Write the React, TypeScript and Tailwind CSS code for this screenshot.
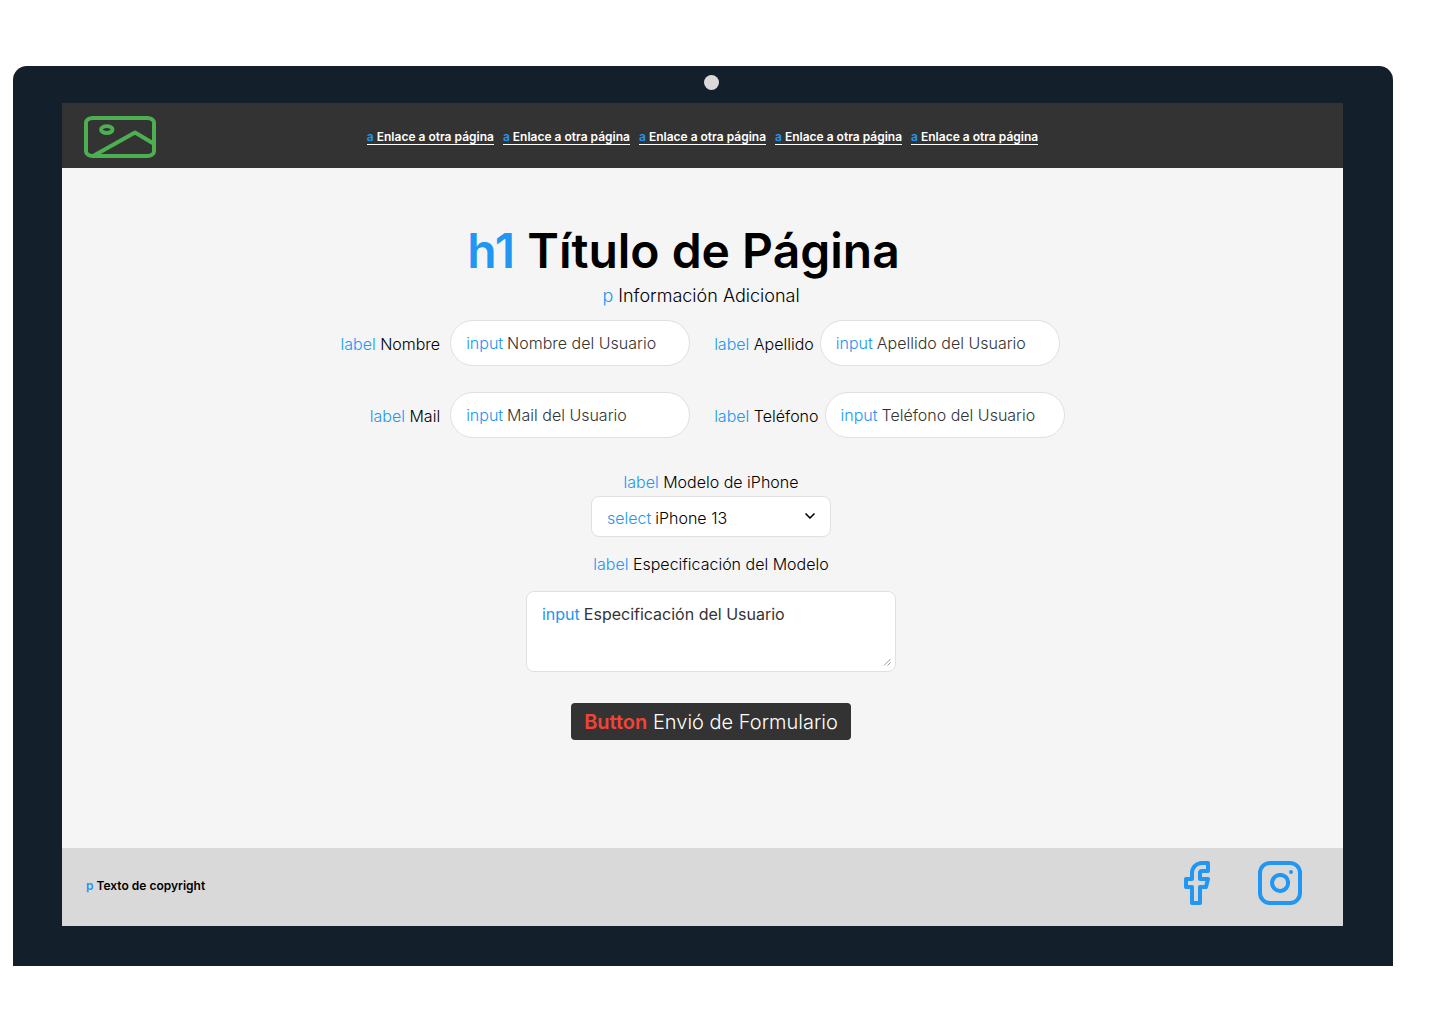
import { ChevronDown, Facebook, Instagram } from "lucide-react";

function Tag({ children }: { children: string }) {
  return <span className="text-[#2196f3]">{children}</span>;
}

function Logo() {
  return (
    <svg width="72" height="42" viewBox="0 0 72 42" fill="none" stroke="#4caf50" strokeWidth="4" strokeLinejoin="round" role="img" aria-label="Logo">
      <rect x="2" y="2" width="68" height="38" rx="6.5" ry="4.5" />
      <ellipse cx="22.8" cy="13.6" rx="5.8" ry="3.4" strokeWidth="3.8" />
      <path d="M10 39.5 51 16.5 69.5 27.5" />
    </svg>
  );
}

type FieldProps = { id: string; label: string; value: string; type?: string; className: string };

function Field({ id, label, value, type = "text", className }: FieldProps) {
  return (
    <div className={className}>
      <label htmlFor={id} className="pt-[2px] whitespace-nowrap">
        <Tag>label</Tag> {label}
      </label>
      <div className="flex h-[46px] w-60 items-center gap-1 rounded-full border border-[#e0e0e0] bg-white px-[15px]">
        <Tag>input</Tag>
        <input id={id} type={type} defaultValue={value} className="min-w-0 flex-1 bg-transparent text-[#333333] outline-none" />
      </div>
    </div>
  );
}

const links = [1, 2, 3, 4, 5];

export default function App() {
  return (
    <div className="bg-white pt-[66px] pr-[47px] pb-[58px] pl-[13px] font-['Inter',sans-serif] text-black">
      <div className="rounded-t-[14px] bg-[#131f2a] pt-[9px] pr-[50px] pb-10 pl-[49px]">
        <div className="flex justify-center pb-[13px] pl-[17px]">
          <div className="size-[15px] rounded-full bg-[#d9d9d9]" />
        </div>

        <header className="grid h-[65px] grid-cols-[1fr_auto_1fr] items-center bg-[#333333] pt-[3px]">
          <div className="pl-[22px]">
            <Logo />
          </div>
          <nav className="flex gap-[9px]">
            {links.map((n) => (
              <a key={n} href="#" className="border-b border-white text-xs leading-[14px] font-semibold whitespace-nowrap text-white">
                <Tag>a</Tag> Enlace a otra página
              </a>
            ))}
          </nav>
        </header>

        <main className="flex flex-col items-center bg-[#f5f5f5] pt-[51px] pb-[108px]">
          <h1 className="pr-[38px] text-5xl leading-[64px] font-semibold">
            <Tag>h1</Tag> Título de Página
          </h1>
          <p className="pr-[3px] text-lg leading-[26px] font-light">
            <Tag>p</Tag> Información Adicional
          </p>

          <form className="flex flex-col items-center text-base leading-6 font-light" onSubmit={(e) => e.preventDefault()}>
            <div className="mt-[11px] grid grid-cols-[auto_auto] gap-x-6 gap-y-[26px]">
              <Field id="nombre" label="Nombre" value="Nombre del Usuario" className="flex items-center justify-end gap-[10px]" />
              <Field id="apellido" label="Apellido" value="Apellido del Usuario" className="flex items-center gap-[6px]" />
              <Field id="mail" label="Mail" value="Mail del Usuario" type="email" className="flex items-center justify-end gap-[10px]" />
              <Field id="telefono" label="Teléfono" value="Teléfono del Usuario" type="tel" className="flex items-center gap-[6px]" />
            </div>

            <div className="flex flex-col items-center pl-[17px]">
              <label htmlFor="modelo" className="mt-8">
                <Tag>label</Tag> Modelo de iPhone
              </label>
              <div className="relative mt-[2px] flex h-[41px] w-60 items-center gap-1 rounded-lg border border-[#e0e0e0] bg-white pt-[2px] pl-[15px]">
                <Tag>select</Tag>
                <select id="modelo" className="h-full min-w-0 flex-1 appearance-none bg-transparent outline-none">
                  <option>iPhone 13</option>
                </select>
                <ChevronDown size={16} strokeWidth={2.5} className="pointer-events-none absolute top-[11px] right-3" />
              </div>

              <label htmlFor="especificacion" className="mt-[15px]">
                <Tag>label</Tag> Especificación del Modelo
              </label>
              <div className="relative mt-[15px] flex h-[81px] w-[370px] gap-1 rounded-lg border border-[#e0e0e0] bg-white px-[15px] pt-[10px] font-normal">
                <Tag>input</Tag>
                <textarea id="especificacion" defaultValue="Especificación del Usuario" className="min-w-0 flex-1 resize-none bg-transparent text-[#333333] outline-none" />
                <svg width="8" height="8" viewBox="0 0 8 8" fill="none" stroke="#999999" className="absolute right-1 bottom-[5px]" aria-hidden="true">
                  <path d="M1 7.5 7.5 1M4.5 7.5l3-3" />
                </svg>
              </div>

              <button type="submit" className="mt-[31px] h-[37px] rounded bg-[#333333] px-[13px] text-xl text-white">
                <span className="font-semibold text-[#f44336]">Button</span> Envió de Formulario
              </button>
            </div>
          </form>
        </main>

        <footer className="flex h-[78px] items-start justify-between bg-[#d9d9d9] pr-[39px] pl-6">
          <p className="pt-[30px] text-xs leading-4 font-semibold">
            <Tag>p</Tag> Texto de copyright
          </p>
          <div className="flex gap-9 pt-[11px] text-[#2196f3]">
            <a href="#" aria-label="Facebook">
              <Facebook size={48} />
            </a>
            <a href="#" aria-label="Instagram">
              <Instagram size={48} />
            </a>
          </div>
        </footer>
      </div>
    </div>
  );
}
